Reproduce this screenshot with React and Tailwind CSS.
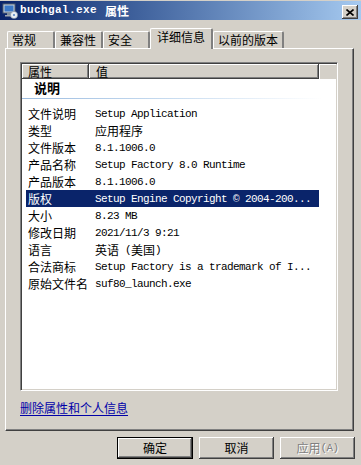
import React from 'react';

const CJK = '"Noto Sans CJK SC", "Noto Sans", sans-serif';
const MONO = '"Liberation Mono", "Noto Sans CJK SC", monospace';

// split ascii runs (mono, 6px advance) from CJK runs (12px)
function Mixed({ text, bold }) {
  const parts = text.split(/([\u0000-\u00ff]+)/).filter(Boolean);
  return (
    <>
      {parts.map((p, i) =>
        /^[\u0000-\u00ff]+$/.test(p) ? (
          <span key={i} className={`text-[11px] tracking-[-0.6px] whitespace-pre ${bold ? 'font-bold' : ''}`} style={{ fontFamily: MONO }}>{p}</span>
        ) : (
          <span key={i} className={`text-[12px] ${bold ? 'font-bold' : ''}`} style={{ fontFamily: CJK }}>{p}</span>
        )
      )}
    </>
  );
}

const rows = [
  ["文件说明", "Setup Application"],
  ["类型", "应用程序"],
  ["文件版本", "8.1.1006.0"],
  ["产品名称", "Setup Factory 8.0 Runtime"],
  ["产品版本", "8.1.1006.0"],
  ["版权", "Setup Engine Copyright © 2004-200..."],
  ["大小", "8.23 MB"],
  ["修改日期", "2021/11/3 9:21"],
  ["语言", "英语 (美国)"],
  ["合法商标", "Setup Factory is a trademark of I..."],
  ["原始文件名", "suf80_launch.exe"],
];

const raised = "shadow-[inset_-1px_-1px_0_#404040,inset_1px_1px_0_#ffffff,inset_-2px_-2px_0_#808080]";

export default function App() {
  const tabs = [
    { label: "常规", w: "w-[48px]" },
    { label: "兼容性", w: "w-[48px]" },
    { label: "安全", w: "w-[47px]" },
    { label: "详细信息", w: "w-[63px]", active: true },
    { label: "以前的版本", w: "w-[71px]" },
  ];

  return (
    <div className="w-[361px] h-[465px] bg-[#d4d0c8] flex flex-col overflow-hidden select-none" style={{ fontFamily: CJK }}>
      {/* title bar */}
      <div className="mt-[1px] h-[19px] shrink-0 flex items-start bg-gradient-to-r from-[#0a246a] to-[#a6caf0]">
        <svg width="16" height="16" viewBox="0 0 16 16" className="ml-[2px] mt-[2px] shrink-0">
          <rect x="1" y="1" width="12" height="9" fill="#c8d0d8" stroke="#4a5a70" />
          <rect x="2.5" y="2.5" width="9" height="6" fill="#3a78c8" />
          <rect x="5" y="10" width="4" height="2" fill="#8090a0" />
          <rect x="3" y="12" width="8" height="1.5" fill="#a0a8b0" />
          <circle cx="12" cy="12" r="3.6" fill="#e8eef4" stroke="#7a8a9a" strokeWidth="0.6" />
          <circle cx="12" cy="12" r="1" fill="#5080c0" />
        </svg>
        <div className="ml-[2px] mt-[3px] text-white leading-[13px] flex items-center">
          <span className="text-[11px] font-bold tracking-[0.4px] whitespace-pre" style={{ fontFamily: MONO }}>buchgal.exe </span>
          <span className="text-[12px] font-bold ml-[1px]" style={{ fontFamily: CJK }}>属性</span>
        </div>
        <div className={`ml-auto mr-[3px] mt-[4px] w-[16px] h-[14px] bg-[#d4d0c8] ${raised} flex items-center justify-center`}>
          <svg width="8" height="7" viewBox="0 0 8 7">
            <path d="M0.5 0.5 L7.5 6.5 M7.5 0.5 L0.5 6.5" stroke="#000" strokeWidth="1.6" />
          </svg>
        </div>
      </div>

      {/* tabs */}
      <div className="mt-[8px] h-[20px] shrink-0 pl-[7px] flex items-end relative z-10">
        {tabs.map((t) => (
          <div
            key={t.label}
            className={`${t.w} ${t.active ? 'h-[21px] -mb-px bg-[#d4d0c8] pb-[4px]' : 'h-[17px]'} shrink-0 rounded-t-[2px] border-l border-t border-white border-r-2 border-r-[#808080] flex items-center ${t.active ? 'justify-center' : 'pl-[4px]'}`}
          >
            <span className="text-[12px] leading-[12px] text-black">{t.label}</span>
          </div>
        ))}
      </div>

      {/* panel */}
      <div className="ml-[5px] w-[349px] h-[383px] shrink-0 border-l border-t border-white border-r border-b border-r-[#404040] border-b-[#404040] shadow-[inset_-1px_-1px_0_#808080] flex flex-col pl-[14px] pt-[13px]">
        {/* list view */}
        <div className="w-[318px] h-[329px] shrink-0 bg-white border-l border-t border-[#808080] border-r border-b border-r-white border-b-white shadow-[inset_1px_1px_0_#404040,inset_-1px_-1px_0_#d4d0c8] p-[1px] flex flex-col">
          {/* header */}
          <div className="h-[15px] flex shrink-0">
            <div className={`w-[67px] bg-[#d4d0c8] ${raised} pl-[6px] flex items-center`}>
              <span className="text-[12px] leading-[12px]">属性</span>
            </div>
            <div className={`w-[230px] bg-[#d4d0c8] ${raised} pl-[7px] flex items-center`}>
              <span className="text-[12px] leading-[12px]">值</span>
            </div>
            <div className="flex-1 bg-[#d4d0c8] shadow-[inset_1px_1px_0_#ffffff]" />
          </div>

          {/* group */}
          <div className="h-[16px] shrink-0 pl-[12px] flex items-center">
            <span className="text-[13px] leading-[13px] font-bold">说明</span>
          </div>
          <div className="mt-[3px] h-px w-[300px] bg-gradient-to-r from-[#9cbce0] via-[#c8dcf0] to-white" />
          <div className="h-[6px]" />

          {/* rows */}
          <div className="flex flex-col">
            {rows.map(([k, v]) => {
              const sel = k === "版权";
              return (
                <div key={k} className={`h-[17px] ml-[4px] w-[293px] flex items-center ${sel ? 'bg-[#0a246a] text-white' : 'text-black'}`}>
                  <div className="w-[69px] pl-[2px] leading-[12px] text-[12px] whitespace-nowrap">{k}</div>
                  <div className="leading-[12px] whitespace-nowrap flex items-center">
                    <Mixed text={v} />
                  </div>
                </div>
              );
            })}
          </div>
        </div>

        {/* link */}
        <div className="mt-[8px] leading-[14px]">
          <span className="text-[12px] leading-[14px] text-[#0000a8] underline underline-offset-[2px]">删除属性和个人信息</span>
        </div>
      </div>

      {/* buttons */}
      <div className="mt-[6px] flex justify-end gap-[6px] pr-[6px]">
        <div className="w-[76px] h-[22px] border border-black shadow-[inset_-1px_-1px_0_#000000] bg-[#d4d0c8] flex items-center justify-center">
          <div className={`w-full h-full ${raised} flex items-center justify-center`}>
            <span className="text-[12px] leading-[12px]">确定</span>
          </div>
        </div>
        <div className={`w-[75px] h-[22px] bg-[#d4d0c8] ${raised} flex items-center justify-center`}>
          <span className="text-[12px] leading-[12px]">取消</span>
        </div>
        <div className={`w-[75px] h-[22px] bg-[#d4d0c8] ${raised} flex items-center justify-center text-[#808080] [text-shadow:1px_1px_0_#ffffff]`}>
          <Mixed text="应用(A)" />
        </div>
      </div>
    </div>
  );
}
